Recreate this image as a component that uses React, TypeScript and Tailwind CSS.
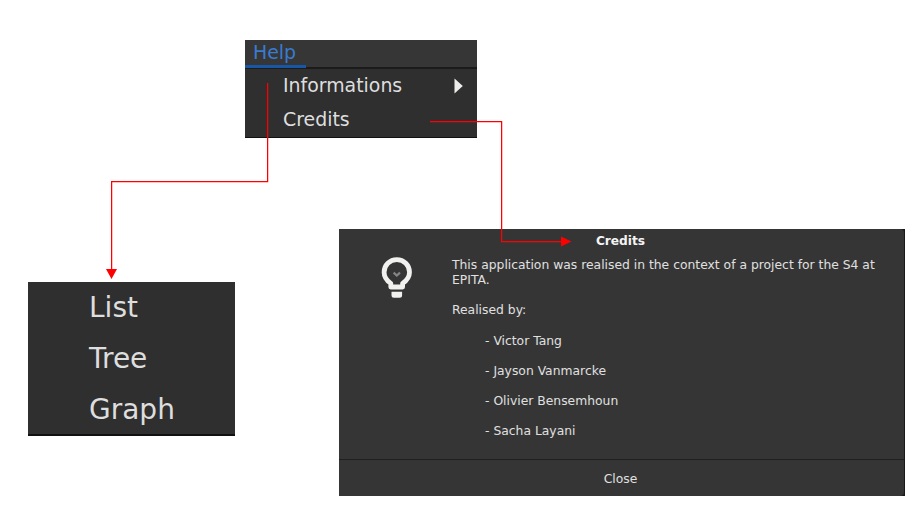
const names = ["Victor Tang", "Jayson Vanmarcke", "Olivier Bensemhoun", "Sacha Layani"];

function HelpMenu() {
  return (
    <section className="absolute left-[245px] top-[40px] flex h-[98px] w-[232px] flex-col border-b border-[#101010] bg-[#2f2f2f] text-[18.9px] text-[#dedede]">
      <header className="flex h-[29px] shrink-0 border-b-2 border-[#1b1b1b] bg-[#363636]">
        <div className="h-[28px] w-[61px] border-b-[3px] border-[#1657a8] pl-[8px] leading-[24px] text-[#3a7bd0]">Help</div>
      </header>
      <div className="flex h-[34px] items-center justify-between pl-[38px] pr-[14px]">
        <span className="pb-[2px]">Informations</span>
        <svg className="h-[16px] w-[9px]" viewBox="0 0 9 16" fill="#ededeb">
          <path d="M.5.5 8.8 8 .5 15.5Z" />
        </svg>
      </div>
      <div className="flex h-[34px] items-center pb-[2px] pl-[38px]">Credits</div>
    </section>
  );
}

function SubMenu() {
  return (
    <section className="absolute left-[28px] top-[282px] flex h-[154px] w-[207px] flex-col border-b-2 border-[#111111] bg-[#2f2f2f] pl-[61px] text-[28px] leading-[51px] text-[#dedede]">
      <div>List</div>
      <div>Tree</div>
      <div>Graph</div>
    </section>
  );
}

function CreditsDialog() {
  return (
    <section className="absolute left-[339px] top-[229px] flex h-[267px] w-[566px] flex-col bg-[#191919] pr-px text-[12.35px] leading-[15px] text-[#e0e0e0]">
      <div className="flex h-full flex-col rounded-r-[4px] bg-[#353535]">
        <h1 className="h-[29px] pr-[2px] pt-[5px] text-center text-[12.2px] font-bold text-[#f4f4f4]">Credits</h1>
        <div className="flex h-[201px]">
          <svg className="-mt-px ml-[42px] h-[42px] w-[32px]" viewBox="0 0 32 42">
            <path
              d="M15.8 2.6C8.7 2.6 3.1 8.3 3.1 15.2C3.1 20.1 5.8 23.6 9.8 26.4V30H21.6V26.4C25.6 23.6 28.5 20.1 28.5 15.2C28.5 8.3 22.9 2.6 15.8 2.6Z"
              fill="none"
              stroke="#f1f1f0"
              strokeWidth="4.8"
              strokeLinejoin="round"
            />
            <path d="m12.6 15.6 3.2 3 3.2-3" fill="none" stroke="#858585" strokeWidth="2.2" />
            <path d="M10.5 34.8h10.6v3.4a2.5 2.5 0 0 1-2.5 2.5h-5.6a2.5 2.5 0 0 1-2.5-2.5Z" fill="#f1f1f0" />
          </svg>
          <div className="ml-[39px] w-[440px]">
            <p>
              This application was realised in the context of a project for the S4 at
              <br />
              EPITA.
            </p>
            <p className="mt-[15px]">Realised by:</p>
            <ul className="mt-[16px] flex flex-col gap-[15px] pl-[33px]">
              {names.map((name) => (
                <li key={name}>- {name}</li>
              ))}
            </ul>
          </div>
        </div>
        <footer className="flex grow items-center justify-center border-t border-[#202020] pr-[2px] pt-[3px]">Close</footer>
      </div>
    </section>
  );
}

export default function App() {
  return (
    <main className="relative h-[514px] w-[922px] overflow-hidden bg-white font-['DejaVu_Sans',sans-serif]">
      <HelpMenu />
      <SubMenu />
      <CreditsDialog />
      <svg className="absolute inset-0" width="922" height="514" viewBox="0 0 922 514">
        <g fill="none" stroke="#ff0000" strokeWidth="1.25">
          <path d="M267.625 83V181.625H111.625V270" />
          <path d="M430 121.625H501.625V241.625H562" />
        </g>
        <path d="M106 269H117L111.5 279Z M561 236.5V246.5L571.5 241.5Z" fill="#ff0000" />
      </svg>
    </main>
  );
}
